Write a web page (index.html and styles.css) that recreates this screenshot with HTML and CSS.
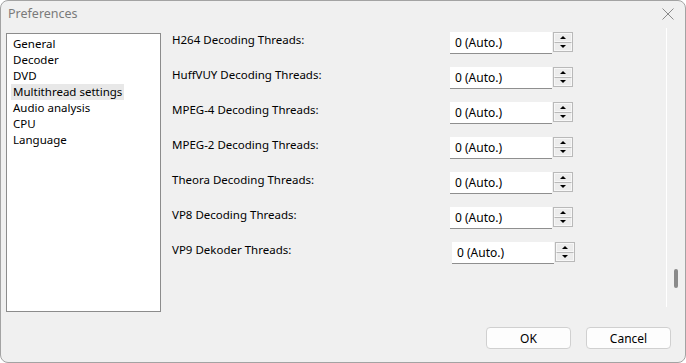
FILE: index.html
```html
<!DOCTYPE html>
<html lang="en">
<head>
  <meta charset="UTF-8" />
  <title>Preferences</title>
  <link rel="stylesheet" href="styles.css">
</head>
<body>
  <div class="window">
    <div class="title-bar">
      <span class="title">Preferences</span>
      <svg class="close-icon" width="12" height="12" viewBox="0 0 12 12">
        <path d="M0.5 0.5 L11.5 11.5 M11.5 0.5 L0.5 11.5" stroke="#8a8a8a" stroke-width="1" fill="none" />
      </svg>
    </div>

    <div class="main">
      <div class="page-list">
        <div class="page-item">General</div>
        <div class="page-item">Decoder</div>
        <div class="page-item">DVD</div>
        <div class="page-item"><span class="selected">Multithread settings</span></div>
        <div class="page-item">Audio analysis</div>
        <div class="page-item">CPU</div>
        <div class="page-item">Language</div>
      </div>

      <div class="scroll-area">
        <div class="settings">
          <div class="setting-row">
            <span class="setting-label">H264 Decoding Threads:</span>
            <div class="spin-box">
              <div class="spin-value">0 (Auto.)</div>
              <div class="spin-buttons">
                <div class="spin-btn"><span class="arrow-up"></span></div>
                <div class="spin-btn"><span class="arrow-down"></span></div>
              </div>
            </div>
          </div>
          <div class="setting-row">
            <span class="setting-label">HuffVUY Decoding Threads:</span>
            <div class="spin-box">
              <div class="spin-value">0 (Auto.)</div>
              <div class="spin-buttons">
                <div class="spin-btn"><span class="arrow-up"></span></div>
                <div class="spin-btn"><span class="arrow-down"></span></div>
              </div>
            </div>
          </div>
          <div class="setting-row">
            <span class="setting-label">MPEG-4 Decoding Threads:</span>
            <div class="spin-box">
              <div class="spin-value">0 (Auto.)</div>
              <div class="spin-buttons">
                <div class="spin-btn"><span class="arrow-up"></span></div>
                <div class="spin-btn"><span class="arrow-down"></span></div>
              </div>
            </div>
          </div>
          <div class="setting-row">
            <span class="setting-label">MPEG-2 Decoding Threads:</span>
            <div class="spin-box">
              <div class="spin-value">0 (Auto.)</div>
              <div class="spin-buttons">
                <div class="spin-btn"><span class="arrow-up"></span></div>
                <div class="spin-btn"><span class="arrow-down"></span></div>
              </div>
            </div>
          </div>
          <div class="setting-row">
            <span class="setting-label">Theora Decoding Threads:</span>
            <div class="spin-box">
              <div class="spin-value">0 (Auto.)</div>
              <div class="spin-buttons">
                <div class="spin-btn"><span class="arrow-up"></span></div>
                <div class="spin-btn"><span class="arrow-down"></span></div>
              </div>
            </div>
          </div>
          <div class="setting-row">
            <span class="setting-label">VP8 Decoding Threads:</span>
            <div class="spin-box">
              <div class="spin-value">0 (Auto.)</div>
              <div class="spin-buttons">
                <div class="spin-btn"><span class="arrow-up"></span></div>
                <div class="spin-btn"><span class="arrow-down"></span></div>
              </div>
            </div>
          </div>
          <div class="setting-row">
            <span class="setting-label">VP9 Dekoder Threads:</span>
            <div class="spin-box spin-box-shifted">
              <div class="spin-value">0 (Auto.)</div>
              <div class="spin-buttons">
                <div class="spin-btn"><span class="arrow-up"></span></div>
                <div class="spin-btn"><span class="arrow-down"></span></div>
              </div>
            </div>
          </div>
        </div>
        <div class="scroll-track">
          <div class="scroll-thumb"></div>
        </div>
      </div>
    </div>

    <div class="footer">
      <button class="dialog-btn">OK</button>
      <button class="dialog-btn">Cancel</button>
    </div>
  </div>
</body>
</html>
```

FILE: styles.css
```css
* {
  box-sizing: border-box;
}

body {
  margin: 0;
  font-family: 'Noto Sans', 'Open Sans', sans-serif;
  font-size: 11.5px;
  color: #000;
  background: #fff;
}

.window {
  width: 686px;
  height: 363px;
  background: #f0f0f0;
  border: 1px solid #a3a3a3;
  border-radius: 8px;
  overflow: hidden;
  display: flex;
  flex-direction: column;
}

.title-bar {
  height: 27px;
  display: flex;
  align-items: center;
  justify-content: space-between;
  padding: 0 11px 0 7px;
}

.title {
  font-size: 12.5px;
  color: #7a7a7a;
  margin-top: -2px;
}

.close-icon {
  margin-top: -1px;
}

.main {
  display: flex;
  align-items: flex-start;
  padding-left: 5px;
}

.page-list {
  width: 155px;
  height: 279px;
  margin-top: 5px;
  background: #fff;
  border: 1px solid #8c8c8c;
  padding: 2px 0 0 6px;
}

.page-item {
  line-height: 16px;
  height: 16px;
}

.selected {
  display: inline-block;
  background: #e8e8e8;
  padding: 0 2px;
  margin-left: -2px;
}

.scroll-area {
  flex: 1;
  height: 279px;
  display: flex;
}

.settings {
  flex: 1;
  padding: 4px 0 0 11px;
  border-right: 1px solid #fff;
}

.setting-row {
  height: 35px;
  display: flex;
  align-items: flex-start;
}

.setting-label {
  width: 278px;
  line-height: 16px;
}

.spin-box {
  display: flex;
  gap: 1px;
}

.spin-box-shifted {
  margin-left: 2px;
}

.spin-value {
  width: 102px;
  height: 22px;
  background: #fff;
  border-bottom: 1px solid #8f8f8f;
  padding: 3px 0 0 5px;
  font-size: 12px;
  line-height: 16px;
}

.spin-buttons {
  display: flex;
  flex-direction: column;
  width: 20px;
  height: 20px;
  border: 1px solid #b9b9b9;
}

.spin-btn {
  flex: 1;
  display: flex;
  align-items: center;
  justify-content: center;
  background: #ececec;
  border: 1px solid #f7f7f7;
}

.spin-btn + .spin-btn {
  border-top: 1px solid #b9b9b9;
}

.arrow-up {
  width: 0;
  height: 0;
  border-left: 3.5px solid transparent;
  border-right: 3.5px solid transparent;
  border-bottom: 3.5px solid #000;
}

.arrow-down {
  width: 0;
  height: 0;
  border-left: 3.5px solid transparent;
  border-right: 3.5px solid transparent;
  border-top: 3.5px solid #000;
}

.scroll-track {
  width: 18px;
  padding: 241px 0 0 7px;
}

.scroll-thumb {
  width: 4px;
  height: 19px;
  background: #8a8a8a;
  border-radius: 2px;
}

.footer {
  display: flex;
  justify-content: flex-end;
  gap: 15px;
  padding: 15px 14px 0 0;
}

.dialog-btn {
  width: 85px;
  height: 22px;
  font-family: 'Noto Sans', 'Open Sans', sans-serif;
  font-size: 12px;
  color: #000;
  background: #fdfdfd;
  border: 1px solid #d0d0d0;
  border-radius: 4px;
  padding: 0;
}
```
